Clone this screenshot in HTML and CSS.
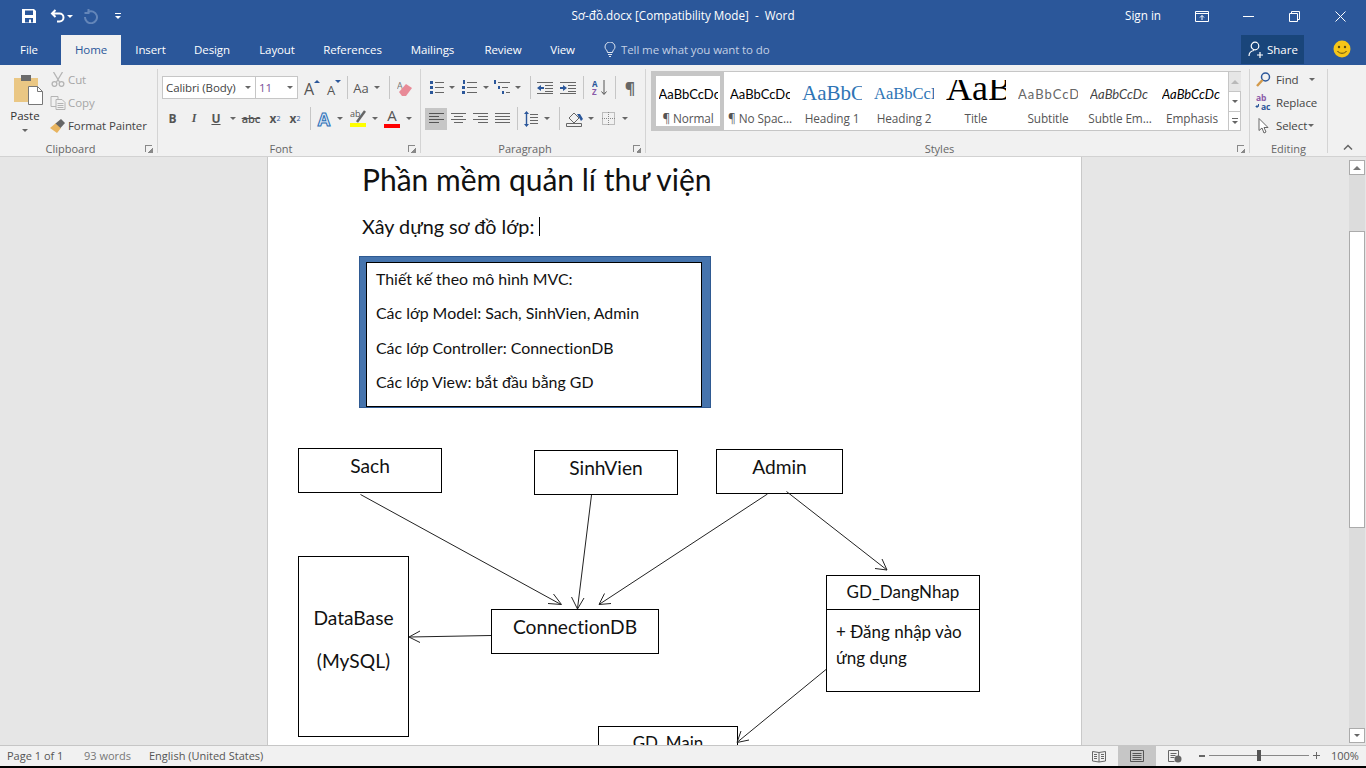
FILE: index.html
```html
<!DOCTYPE html>
<html lang="en">
<head>
<meta charset="utf-8">
<title>Sơ-đồ.docx [Compatibility Mode] - Word</title>
<link rel="stylesheet" href="styles.css">
</head>
<body>
<div class="app">
  <header class="titlebar">
    <div class="qat">
      <svg class="i-save" width="16" height="16" viewBox="0 0 16 16"><path fill="#fff" d="M1 1h12l2 2v12H1z"/><path fill="#2b579a" d="M4 2.500h8v4.500H4zM4 10h8v4.500h-2v-3H8v3H4z"/></svg>
      <svg class="i-undo" width="16" height="14" viewBox="0 0 16 14"><path fill="none" stroke="#fff" stroke-width="2" d="M5.500 1 2 4.500 5.500 8M2.500 4.500h7a4 4 0 0 1 0 8H7"/></svg>
      <span class="arr arr-w w8"></span>
      <svg class="i-redo" width="15" height="15" viewBox="0 0 15 15"><path fill="none" stroke="#6486b9" stroke-width="2" d="M5 3a6 6 0 1 1-3 5"/><path fill="none" stroke="#6486b9" stroke-width="2" d="M5.500 0v4h-4"/></svg>
      <span class="custom"><i></i><span class="arr arr-w w8"></span></span>
    </div>
    <div class="doc-title">Sơ-đồ.docx [Compatibility Mode]&nbsp; -&nbsp; Word</div>
    <div class="winctl">
      <span class="signin">Sign in</span>
      <span class="wbtn"><svg width="14" height="11" viewBox="0 0 14 11"><path fill="none" stroke="#fff" d="M.5.500h13v10H.500zM.5 2.500h13M7 9V4.500M5 6.500l2-2 2 2"/></svg></span>
      <span class="wbtn"><svg width="11" height="1" viewBox="0 0 11 1"><path stroke="#fff" d="M0 .5h11"/></svg></span>
      <span class="wbtn"><svg width="11" height="11" viewBox="0 0 11 11"><path fill="none" stroke="#fff" d="M.5 2.500h8v8h-8zM2.500 2.500v-2h8v8h-2"/></svg></span>
      <span class="wbtn"><svg width="11" height="11" viewBox="0 0 11 11"><path stroke="#fff" d="M.5.500l10 10M10.500.500l-10 10"/></svg></span>
    </div>
  </header>

  <nav class="tabs">
    <span class="tab t-file">File</span>
    <span class="tab t-home">Home</span>
    <span class="tab t-insert">Insert</span>
    <span class="tab t-design">Design</span>
    <span class="tab t-layout">Layout</span>
    <span class="tab t-refs">References</span>
    <span class="tab t-mail">Mailings</span>
    <span class="tab t-review">Review</span>
    <span class="tab t-view">View</span>
    <span class="tell">
      <svg width="12" height="15" viewBox="0 0 12 15"><path fill="none" stroke="#dfe6f1" d="M3.500 10.500C3.500 8 1 7.500 1 5a5 5 0 0 1 10 0c0 2.500-2.500 3-2.500 5.500zM4 12.500h4M5 14.500h2"/></svg>
      <span>Tell me what you want to do</span>
    </span>
    <span class="share">
      <svg width="16" height="17" viewBox="0 0 16 17"><circle cx="7" cy="5" r="3.800" fill="none" stroke="#fff" stroke-width="1.200"/><path fill="none" stroke="#fff" stroke-width="1.200" d="M1 15c0-3 2-5 5-5.500M9 14h6M12 11v6"/></svg>
      <span>Share</span>
    </span>
    <svg class="smile" width="18" height="18" viewBox="0 0 18 18"><circle cx="9" cy="9" r="8.500" fill="#f5c518"/><circle cx="6" cy="7" r="1.200" fill="#5b4a12"/><circle cx="12" cy="7" r="1.200" fill="#5b4a12"/><path d="M4.500 11c1.500 3 7.500 3 9 0" fill="none" stroke="#5b4a12"/></svg>
  </nav>

  <section class="ribbon">
    <div class="group g-clip">
      <div class="gbody clipbody">
        <div class="paste">
          <svg width="30" height="31" viewBox="0 0 30 31"><rect x="0" y="4" width="24" height="24" fill="#eac784"/><rect x="7" y="1" width="10" height="6" fill="#6b6b6b"/><path fill="#fff" stroke="#777" d="M14.500 12.500h9l5 5v13h-14z"/><path fill="none" stroke="#777" d="M23.500 12.500v5h5"/></svg>
          <span class="paste-l">Paste</span>
          <span class="arr"></span>
        </div>
        <div class="clipcol">
          <div class="smallbtn off"><svg width="14" height="15" viewBox="0 0 14 15"><path fill="none" stroke="#b4b4b4" stroke-width="1.300" d="M2.500 0l6 10M11.500 0l-6 10"/><circle cx="3.500" cy="12" r="2.400" fill="none" stroke="#b4b4b4" stroke-width="1.300"/><circle cx="10.500" cy="12" r="2.400" fill="none" stroke="#b4b4b4" stroke-width="1.300"/></svg><span>Cut</span></div>
          <div class="smallbtn off"><svg width="15" height="14" viewBox="0 0 15 14"><path fill="#f1f1f1" stroke="#b4b4b4" d="M.5.500h7v10h-7z"/><path fill="#f1f1f1" stroke="#b4b4b4" d="M5.500 3.500h6l3 3v7h-9z"/><path stroke="#b4b4b4" d="M7 7.500h6M7 9.500h6M7 11.500h6"/></svg><span>Copy</span></div>
          <div class="smallbtn"><svg width="16" height="14" viewBox="0 0 16 14"><path fill="#e8b45f" d="M0 9l6-5 5 5-4 5z"/><path fill="#666" d="M5.500 4.500L11 0l4 4-4.500 5z"/></svg><span>Format Painter</span></div>
        </div>
      </div>
      <div class="glabel"><span>Clipboard</span><i class="launch"></i></div>
    </div>

    <div class="group g-font">
      <div class="gbody pad7">
        <div class="row">
          <div class="combo c-font"><span>Calibri (Body)</span><span class="arr"></span></div>
          <div class="combo c-size"><span class="sz">11</span><span class="arr"></span></div>
          <span class="ic w28"><span class="lg">A</span><i class="up"></i></span>
          <span class="ic w16"><span class="md">A</span><i class="dn"></i></span>
          <span class="sep ml5"></span>
          <span class="ic w26 aa">Aa</span><span class="arr w6"></span>
          <span class="sep ml9"></span>
          <span class="ic w30"><svg width="16" height="16" viewBox="0 0 16 16"><text x="0" y="9" class="erA">A</text><path fill="#e88a97" d="M2 12l7-8 6 4-6 8H5z"/></svg></span>
        </div>
        <div class="row r2">
          <span class="ic w21 fb">B</span>
          <span class="ic w22 fi">I</span>
          <span class="ic w22 fu">U</span><span class="arr w12"></span>
          <span class="ic w24 fs">abc</span>
          <span class="ic w24 fx">x<sub>2</sub></span>
          <span class="ic w16 fx">x<sup>2</sup></span>
          <span class="sep ml7"></span>
          <span class="ic w26 fa">A</span><span class="arr w6"></span>
          <span class="ic w29 col"><svg width="16" height="16" viewBox="0 0 16 16"><text x="0" y="9" class="hlT">ab</text><path stroke="#666" stroke-width="2.500" d="M7 14L15 3"/></svg><i class="bar yellow"></i></span><span class="arr w6"></span>
          <span class="ic w28 col"><span class="fc">A</span><i class="bar red"></i></span><span class="arr w6"></span>
        </div>
      </div>
      <div class="glabel"><span>Font</span><i class="launch"></i></div>
    </div>

    <div class="group g-para">
      <div class="gbody pad7">
        <div class="row">
          <span class="ic w24"><svg width="14" height="15" viewBox="0 0 14 15"><path fill="#2b579a" d="M0 1h3v3H0zM0 6h3v3H0zM0 11h3v3H0z"/><path stroke="#666" d="M5 2.500h9M5 7.500h9M5 12.500h9"/></svg></span><span class="arr w6"></span>
          <span class="ic w28"><svg width="15" height="15" viewBox="0 0 15 15"><path fill="#2b579a" d="M1 0h2v4H1zM0 6h3v3H0zM0 11h3v3H0z"/><path stroke="#666" d="M5 2.500h10M5 7.500h10M5 12.500h10"/></svg></span><span class="arr w6"></span>
          <span class="ic w26"><svg width="16" height="15" viewBox="0 0 16 15"><path fill="#2b579a" d="M0 0h2v4H0zM4 6h2v3H4zM8 11h2v3H8z"/><path stroke="#666" d="M4 2.500h12M8 7.500h6M12 12.500h4"/></svg></span><span class="arr w6"></span>
          <span class="sep ml9"></span>
          <span class="ic w28"><svg width="16" height="12" viewBox="0 0 16 12"><path stroke="#666" d="M0 .5h16M8 3.500h8M8 6.500h8M8 9.500h8M0 11.500h16"/><path fill="#2b579a" d="M0 6l4-3v2h3v2H4v2z"/></svg></span>
          <span class="ic w18"><svg width="16" height="12" viewBox="0 0 16 12"><path stroke="#666" d="M0 .5h16M8 3.500h8M8 6.500h8M8 9.500h8M0 11.500h16"/><path fill="#2b579a" d="M7 6L3 3v2H0v2h3v2z"/></svg></span>
          <span class="sep ml6"></span>
          <span class="ic w31"><svg width="16" height="17" viewBox="0 0 16 17"><text x="0" y="7.500" class="sortA">A</text><text x="0" y="16" class="sortZ">Z</text><path fill="none" stroke="#555" d="M12 1v14M9.500 12.500L12 15.500l2.500-3"/></svg></span>
          <span class="sep"></span>
          <span class="ic w28 pil">¶</span>
        </div>
        <div class="row r2">
          <span class="ic w22 on"><svg width="15" height="11" viewBox="0 0 15 11"><path stroke="#555" d="M0 .5h15M0 3.500h10M0 6.500h15M0 9.500h10"/></svg></span>
          <span class="ic w22"><svg width="15" height="11" viewBox="0 0 15 11"><path stroke="#666" d="M0 .5h15M3 3.500h9M0 6.500h15M3 9.500h9"/></svg></span>
          <span class="ic w22"><svg width="15" height="11" viewBox="0 0 15 11"><path stroke="#666" d="M0 .5h15M5 3.500h10M0 6.500h15M5 9.500h10"/></svg></span>
          <span class="ic w22"><svg width="15" height="11" viewBox="0 0 15 11"><path stroke="#666" d="M0 .5h15M0 3.500h15M0 6.500h15M0 9.500h15"/></svg></span>
          <span class="sep ml4"></span>
          <span class="ic w26"><svg width="14" height="16" viewBox="0 0 14 16"><path fill="#2b579a" d="M2.500 0l2.500 3H3.200v10H5l-2.500 3L0 13h1.800V3H0z"/><path stroke="#666" d="M6 3.500h8M6 6.500h8M6 9.500h8M6 12.500h8"/></svg></span><span class="arr w6"></span>
          <span class="sep ml9"></span>
          <span class="ic w28"><svg width="17" height="16" viewBox="0 0 17 16"><path fill="none" stroke="#666" d="M3 7l5-5 5 5-5 5zM.5 12.500h15v3H.500z"/><path fill="#2b579a" d="M11 3h3l3 5-2 2z"/></svg></span><span class="arr w6"></span>
          <span class="ic w28"><svg width="13" height="13" viewBox="0 0 13 13"><path fill="none" stroke="#888" stroke-dasharray="1 1" d="M.5.500h12v12H.500zM6.500 0v13M0 6.500h13"/></svg></span><span class="arr w6"></span>
        </div>
      </div>
      <div class="glabel"><span>Paragraph</span><i class="launch"></i></div>
    </div>

    <div class="group g-styles">
      <div class="gbody">
        <div class="gallery">
          <div class="sty sel"><div class="pv"><span class="p-body">AaBbCcDc</span></div><div class="sl">¶ Normal</div></div>
          <div class="sty"><div class="pv"><span class="p-body">AaBbCcDc</span></div><div class="sl">¶ No Spac...</div></div>
          <div class="sty"><div class="pv"><span class="p-h1">AaBbC</span></div><div class="sl">Heading 1</div></div>
          <div class="sty"><div class="pv"><span class="p-h2">AaBbCcI</span></div><div class="sl">Heading 2</div></div>
          <div class="sty"><div class="pv"><span class="p-title">AaB</span></div><div class="sl">Title</div></div>
          <div class="sty"><div class="pv"><span class="p-sub">AaBbCcD</span></div><div class="sl">Subtitle</div></div>
          <div class="sty"><div class="pv"><span class="p-sube">AaBbCcDc</span></div><div class="sl">Subtle Em...</div></div>
          <div class="sty"><div class="pv"><span class="p-em">AaBbCcDc</span></div><div class="sl">Emphasis</div></div>
          <div class="gscroll">
            <span class="gs gs1"><i class="tri-up"></i></span>
            <span class="gs"><i class="arr"></i></span>
            <span class="gs gs3"><i class="more"></i><i class="arr"></i></span>
          </div>
        </div>
      </div>
      <div class="glabel"><span>Styles</span><i class="launch"></i></div>
    </div>

    <div class="group g-edit">
      <div class="gbody clipbody2">
        <div class="smallbtn ed"><span class="edi"><svg width="15" height="15" viewBox="0 0 15 15"><circle cx="9.500" cy="5" r="4" fill="none" stroke="#2b579a" stroke-width="1.500"/><path stroke="#d39a4b" stroke-width="2.500" d="M1 14l5.500-6"/></svg></span><span>Find</span><span class="arr w26"></span></div>
        <div class="smallbtn ed"><span class="edi"><svg class="rep" width="17" height="17" viewBox="0 0 17 17"><text x="1" y="7" class="repA">ab</text><text x="6" y="16" class="repB">ac</text><path fill="none" stroke="#2b579a" d="M3.500 10v2.500H1M2.500 11L1 12.500 2.500 14"/></svg></span><span>Replace</span></div>
        <div class="smallbtn ed"><span class="edi"><svg width="11" height="16" viewBox="0 0 11 16"><path fill="#fff" stroke="#666" d="M1 .5v12l3-2.500 2 5 2-1-2-4.500h4z"/></svg></span><span>Select</span><span class="arr w8"></span></div>
      </div>
      <div class="glabel glabel-c"><span>Editing</span></div>
    </div>
    <div class="collapse"><svg width="10" height="6" viewBox="0 0 10 6"><path fill="none" stroke="#666" stroke-width="1.500" d="M1 5.500l4-4 4 4"/></svg></div>
  </section>

  <main class="docarea">
    <div class="page">
      <div class="doc-head">
        <h1 class="doc-h1">Phần mềm quản lí thư viện</h1>
        <p class="doc-p">Xây dựng sơ đồ lớp:<span class="caret"></span></p>
        <div class="note">
          <div class="note-in">
            <p>Thiết kế theo mô hình MVC:</p>
            <p>Các lớp Model: Sach, SinhVien, Admin</p>
            <p>Các lớp Controller: ConnectionDB</p>
            <p>Các lớp View: bắt đầu bằng GD</p>
          </div>
        </div>
      </div>
      <div class="canvas">
        <div class="node n-sach">Sach</div>
        <div class="node n-sv">SinhVien</div>
        <div class="node n-admin">Admin</div>
        <div class="node n-db"><p>DataBase</p><p>(MySQL)</p></div>
        <div class="node n-conn">ConnectionDB</div>
        <div class="node n-login"><div class="login-h">GD_DangNhap</div><div class="login-b">+ Đăng nhập vào ứng dụng</div></div>
        <div class="node n-main">GD_Main</div>
        <svg class="links" width="813" height="338" viewBox="268 408 813 338">
          <g fill="none" stroke="#222" stroke-width="1">
            <path d="M360.500 494.500L561 604.500M548 603.500L561.500 604.500L553.500 594"/>
            <path d="M591.500 495L577.500 608.500M571.500 597L577.500 609L584 598"/>
            <path d="M767.500 494L599 604.500M604.500 593.500L599 604.500L611 603.500"/>
            <path d="M786.500 491.500L887 570M875 568.500L887 570L882 559"/>
            <path d="M491 635.500L409.500 637M420 631L409 637L420 642.500"/>
            <path d="M826 669.500L737.500 742M741 731L737 742.500L749 740"/>
          </g>
        </svg>
      </div>
    </div>
    <aside class="vscroll">
      <span class="sb-btn"><i class="tri-up"></i></span>
      <span class="sb-track"><span class="sb-thumb"></span></span>
      <span class="sb-btn"><i class="arr"></i></span>
    </aside>
  </main>

  <footer class="status">
    <span class="st st-page">Page 1 of 1</span>
    <span class="st st-words">93 words</span>
    <span class="st st-lang">English (United States)</span>
    <span class="views">
      <span class="vw"><svg width="14" height="13" viewBox="0 0 14 13"><path fill="none" stroke="#666" d="M.5 1.500l6.500 1 6.500-1v9.500l-6.500 1-6.500-1zM7 2.500V12M2 4.500h3M2 6.500h3M2 8.500h3M9 4.500h3M9 6.500h3M9 8.500h3"/></svg></span>
      <span class="vw vw-on"><svg width="14" height="12" viewBox="0 0 14 12"><path fill="none" stroke="#555" d="M.5.500h13v11H.500zM2.500 3.500h9M2.500 5.500h9M2.500 7.500h9M2.500 9.500h9"/></svg></span>
      <span class="vw"><svg width="14" height="13" viewBox="0 0 14 13"><path fill="none" stroke="#666" d="M.5.500h10v8M.5.500v11h6M2.500 3.500h6M2.500 5.500h5M2.500 7.500h4"/><circle cx="10" cy="9" r="3.500" fill="#666"/></svg></span>
    </span>
    <span class="zoom">
      <span class="z-m"></span>
      <span class="z-track"><span class="z-thumb"></span></span>
      <span class="z-p"></span>
      <span class="z-v">100%</span>
    </span>
  </footer>
  <div class="bottom"></div>
</div>
</body>
</html>
```

FILE: styles.css
```css
* { box-sizing: border-box; }
html, body { margin: 0; padding: 0; }
body { width: 1366px; height: 768px; overflow: hidden; background: #000; font-family: "Open Sans", "Noto Sans", sans-serif; font-size: 11.5px; color: #444; }
i { display: block; font-style: normal; }
svg { display: block; flex: none; }
.app { width: 1366px; height: 768px; display: flex; flex-direction: column; }

/* title bar */
.titlebar { height: 35px; background: #2b579a; display: grid; grid-template-columns: 1fr auto 1fr; color: #fff; flex: none; }
.qat { display: flex; align-items: center; padding: 0 0 3px 21px; }
.i-undo { margin-left: 13px; }
.i-redo { margin-left: 9px; }
.custom { display: flex; flex-direction: column; align-items: center; gap: 2px; width: 8px; margin-left: 16px; }
.custom i { width: 6px; height: 1px; background: #fff; }
.doc-title { font-size: 11.7px; line-height: 31px; white-space: nowrap; }
.winctl { display: flex; justify-content: flex-end; align-items: center; padding: 0 3px 3px 0; }
.signin { margin: -2px 18px 0 0; font-size: 11.7px; }
.wbtn { width: 46px; height: 32px; display: flex; align-items: center; justify-content: center; }

/* tabs */
.tabs { height: 30px; background: #2b579a; display: flex; color: #fff; flex: none; }
.tab { display: flex; align-items: center; justify-content: center; height: 30px; padding-bottom: 2px; font-size: 11.5px; letter-spacing: -.1px; }
.t-file { width: 58px; margin-right: 3px; }
.t-home { width: 60px; background: #f1f1f1; color: #2b579a; }
.t-insert { width: 59px; }
.t-design { width: 64px; }
.t-layout { width: 66px; }
.t-refs { width: 85px; }
.t-mail { width: 75px; }
.t-review { width: 66px; }
.t-view { width: 53px; }
.tell { display: flex; align-items: center; gap: 5px; height: 30px; padding-bottom: 2px; margin-left: 15px; width: 637px; color: #c3d0e4; font-size: 11.5px; letter-spacing: -.1px; }
.share { width: 63px; height: 29px; background: #19457a; display: flex; align-items: center; gap: 3px; padding-left: 7px; font-size: 11.5px; }
.smile { margin: 5px 0 0 29px; }

/* ribbon */
.ribbon { height: 92px; flex: none; background: #f1f1f1; border-bottom: 1px solid #d2d2d2; display: flex; padding: 4px 0 3px; }
.group { display: flex; flex-direction: column; border-right: 1px solid #d4d4d4; }
.gbody { flex: 1; min-height: 0; }
.g-clip { width: 158px; }
.g-font { width: 263px; }
.g-para { width: 225px; }
.g-styles { width: 604px; }
.g-edit { width: 78px; }
.glabel { height: 14px; margin-bottom: -3px; display: flex; line-height: 14px; font-size: 11px; color: #666; }
.glabel span { flex: 1; text-align: center; }
.glabel-c { padding: 0; }
.launch { width: 16px; height: 14px; background:
  linear-gradient(#888, #888) 4px 3px / 7px 1px no-repeat,
  linear-gradient(#888, #888) 4px 3px / 1px 7px no-repeat,
  linear-gradient(135deg, transparent 50%, #888 50%) 7px 6px / 5px 5px no-repeat; }
.row { display: flex; align-items: center; height: 23px; padding-left: 4px; }
.r2 { margin-top: 8px; }
.pad7 { padding-top: 7px; }
.sep { width: 1px; height: 23px; background: #c6c6c6; flex: none; }
.ml4 { margin-left: 4px; } .ml5 { margin-left: 5px; } .ml6 { margin-left: 6px; } .ml7 { margin-left: 7px; } .ml9 { margin-left: 9px; }
.ic { height: 22px; display: flex; align-items: center; justify-content: center; flex: none; position: relative; color: #555; }
.w16 { width: 16px; } .w18 { width: 18px; } .w21 { width: 21px; } .w22 { width: 22px; } .w24 { width: 24px; } .w26 { width: 26px; } .w28 { width: 28px; } .w29 { width: 29px; } .w30 { width: 30px; } .w31 { width: 31px; }
.arr { display: flex; justify-content: center; align-items: center; flex: none; height: 3px; }
.arr::before { content: ""; border: 3px solid transparent; border-top-color: #666; border-bottom: 0; }
.arr-w::before { border-top-color: #fff; }
.w6 { width: 6px; } .w8 { width: 8px; } .w12 { width: 12px; }
.arr.w26 { width: 26px; padding-left: 0; }
.on { background: #c6c6c6; }

/* clipboard */
.clipbody { display: flex; margin-top: -1px; padding-left: 4px; }
.paste { width: 44px; display: flex; flex-direction: column; align-items: center; padding-top: 6px; }
.paste svg { margin-left: 6px; }
.paste-l { margin-top: 3px; font-size: 11.5px; line-height: 16px; color: #333; margin-left: -2px; }
.paste .arr { margin: 5px 0 0 -2px; }
.clipcol { padding-left: 2px; }
.smallbtn { height: 23px; display: flex; align-items: center; gap: 4px; font-size: 11.5px; letter-spacing: -.1px; color: #444; white-space: nowrap; }
.off { color: #a6a6a6; }
.clipcol .smallbtn svg { width: 16px; }
.clipcol .smallbtn { gap: 2px; }

/* font */
.combo { height: 23px; background: #fff; border: 1px solid #c6c6c6; display: flex; align-items: center; justify-content: space-between; padding: 0 4px 0 3px; flex: none; font-size: 11.5px; color: #444; letter-spacing: -.1px; }
.c-font { width: 94px; }
.c-size { width: 43px; margin-left: -1px; }
.sz { color: #7a4f9a; }
.lg { font-size: 16px; line-height: 16px; margin-top: 2px; }
.md { font-size: 13px; line-height: 16px; margin-top: 4px; }
.up { width: 0; border: 3px solid transparent; border-bottom-color: #2b579a; border-top: 0; margin: -12px 0 0 0; }
.dn { width: 0; border: 3px solid transparent; border-top-color: #2b579a; border-bottom: 0; margin: -12px 0 0 0; }
.aa { font-size: 13px; }
.erA { font: 9px "Open Sans", sans-serif; fill: #777; }
.hlT { font: 9px "Open Sans", sans-serif; fill: #555; }
.fb { font-weight: 700; font-size: 12px; }
.fi { font-style: italic; font-size: 12px; font-family: "Liberation Serif", serif; font-weight: 700; }
.fu { font-weight: 700; font-size: 12px; text-decoration: underline; }
.fs { font-size: 11px; text-decoration: line-through; font-weight: 600; }
.fx { font-size: 12px; font-weight: 700; }
.fx sub, .fx sup { font-size: 7px; color: #2b579a; font-weight: 400; line-height: 0; }
.fa { font-size: 18px; font-weight: 700; color: #d6e4f5; -webkit-text-stroke: 1px #2b6fb5; }
.col { flex-direction: column; justify-content: flex-start; }
.col svg { margin-bottom: -2px; }
.fc { font-size: 15px; line-height: 15px; color: #555; }
.bar { width: 16px; height: 4px; margin-top: 1px; }
.yellow { background: #ffff00; }
.red { background: #ff0000; }

/* paragraph */
.pil { font-size: 16px; font-weight: 700; color: #666; }
.sortA { font: 700 8px "Open Sans", sans-serif; fill: #2b579a; }
.sortZ { font: 700 8px "Open Sans", sans-serif; fill: #8a5aa8; }

/* styles */
.g-styles .gbody { padding: 2px 0 0 5px; }
.gallery { width: 590px; height: 60px; border: 1px solid #c6c6c6; background: #fff; display: flex; }
.sty { width: 72px; height: 58px; flex: none; display: flex; flex-direction: column; align-items: center; padding: 6px 0 0; }
.sel { border: 4px solid #c6c6c6; padding-top: 2px; }
.pv { height: 31px; width: 60px; flex: none; overflow: hidden; display: flex; align-items: center; justify-content: flex-start; white-space: nowrap; color: #000; font-family: Lato, sans-serif; font-variant-ligatures: none; }
.sl { margin-top: 1px; font-size: 11.8px; line-height: 16px; letter-spacing: -.1px; color: #555; white-space: nowrap; }
.sel .pv { width: 59px; }
.p-body { font-size: 13px; }
.p-h1 { font: 21px "Liberation Serif", serif; color: #2e74b5; }
.p-h2 { font: 16.5px "Liberation Serif", serif; color: #2e74b5; }
.p-title { display: block; align-self: flex-start; margin-top: 2px; height: 20px; overflow: hidden; font: 36px/16px "Liberation Serif", serif; color: #000; }
.p-sub { font-size: 13px; letter-spacing: 1px; color: #666; }
.p-sube { font-size: 13px; font-style: italic; color: #444; }
.p-em { font-size: 13px; font-style: italic; color: #000; }
.gscroll { width: 13px; flex: none; display: flex; flex-direction: column; border-left: 1px solid #c6c6c6; }
.gs { height: 20px; display: flex; align-items: center; justify-content: center; border-bottom: 1px solid #c6c6c6; }
.gs1 { height: 20px; background: #e6e6e6; }
.gs3 { border-bottom: 0; flex: 1; flex-direction: column; gap: 2px; }
.more { width: 6px; height: 1px; background: #666; }
.tri-up { width: 0; border: 4px solid transparent; border-bottom-color: #b9b9b9; border-top: 0; }

/* editing */
.clipbody2 { margin-top: -1px; }
.ed { gap: 0; }
.edi { width: 26px; display: flex; justify-content: center; }
.repA { font: 700 8.500px "Open Sans", sans-serif; fill: #8a5aa8; }
.repB { font: 700 8.500px "Open Sans", sans-serif; fill: #2b579a; }
.collapse { flex: 1; display: flex; justify-content: center; align-items: flex-end; padding: 0 0 3px 2px; }

/* document */
.docarea { flex: 1; min-height: 0; background: #e6e6e6; display: flex; justify-content: space-between; overflow: hidden; }
.page { width: 815px; margin-left: 267px; background: #fff; border: solid #c9c9c9; border-width: 0 1px; display: flex; flex-direction: column; font-family: Lato, "Noto Sans", sans-serif; font-variant-ligatures: none; color: #111; }
.doc-head { height: 251px; flex: none; padding-left: 94px; }
.doc-h1 { margin: 0; height: 45px; line-height: 44px; font-size: 30px; font-weight: 400; white-space: nowrap; }
.doc-p { margin: 0; height: 48px; line-height: 47px; font-size: 19.8px; white-space: nowrap; display: flex; align-items: center; }
.caret { width: 1px; height: 19px; background: #000; margin-left: 5px; }
.note { width: 352px; height: 152px; margin: 6px 0 0 -3px; border: solid #4674ad; border-width: 6px 9px 1px 7px; outline: 1px solid #2f5a92; outline-offset: -1px; }
.note-in { height: 145px; border: 1px solid #000; background: #fff; padding-left: 9px; font-size: 15.9px; }
.note-in p { margin: 0; height: 34.400px; line-height: 31px; white-space: nowrap; }
.canvas { position: relative; flex: 1; overflow: hidden; font-size: 19.2px; }
.links { position: absolute; left: 0; top: 0; }
.node { position: absolute; border: 1px solid #000; background: #fff; text-align: center; line-height: 34px; white-space: nowrap; }
.n-sach { left: 30px; top: 40px; width: 144px; height: 45px; }
.n-sv { left: 266px; top: 42px; width: 144px; height: 45px; }
.n-admin { left: 448px; top: 41px; width: 127px; height: 45px; }
.n-db { left: 30px; top: 148px; width: 111px; height: 181px; padding-top: 39px; }
.n-db p { margin: 0; height: 43px; line-height: 43px; }
.n-conn { left: 223px; top: 201px; width: 168px; height: 45px; }
.n-login { left: 558px; top: 167px; width: 154px; height: 117px; font-size: 17px; line-height: 26px; text-align: left; white-space: normal; }
.login-h { height: 34px; line-height: 32px; text-align: center; border-bottom: 1px solid #000; }
.login-b { padding: 9px 9px 0; }
.n-main { left: 330px; top: 318px; width: 140px; height: 40px; font-size: 17px; line-height: 31px; }

/* scrollbar */
.vscroll { width: 16px; margin-right: 1px; padding-top: 3px; display: flex; flex-direction: column; height: 588px; }
.sb-btn { height: 15px; background: #fff; border: 1px solid #ababab; display: flex; align-items: center; justify-content: center; flex: none; }
.sb-btn .tri-up { border-bottom-color: #777; }
.sb-track { flex: 1; background: #dcdcdc; margin-bottom: 0; padding-top: 56px; }
.sb-thumb { display: block; height: 297px; background: #fff; border: 1px solid #ababab; }
.vscroll .sb-btn:last-child { margin-bottom: 2px; }

/* status */
.status { height: 21px; flex: none; background: #f1f1f1; border-top: 1px solid #c6c6c6; display: flex; align-items: center; font-size: 11px; color: #555; padding: 0 0 1px 7px; }
.st { white-space: nowrap; flex: none; }
.st-page { width: 77px; }
.st-words { width: 65px; color: #777; }
.st-lang { width: 931px; }
.views { display: flex; height: 20px; flex: none; margin-bottom: -1px; }
.vw { height: 20px; display: flex; align-items: center; justify-content: center; width: 38px; }
.vw-on { background: #c6c6c6; }
.zoom { display: flex; align-items: center; margin-left: 5px; flex: none; }
.z-m { width: 6px; height: 2px; background: #666; }
.z-track { width: 100px; height: 1px; background: #888; margin: 0 4px; display: flex; justify-content: center; align-items: center; }
.z-thumb { width: 4px; height: 11px; background: #555; }
.z-p { width: 7px; height: 7px; background: linear-gradient(#666, #666) 0 3px / 7px 1px no-repeat, linear-gradient(#666, #666) 3px 0 / 1px 7px no-repeat; }
.z-v { margin-left: 11px; color: #555; }
.bottom { height: 2px; background: #000; flex: none; }
```
